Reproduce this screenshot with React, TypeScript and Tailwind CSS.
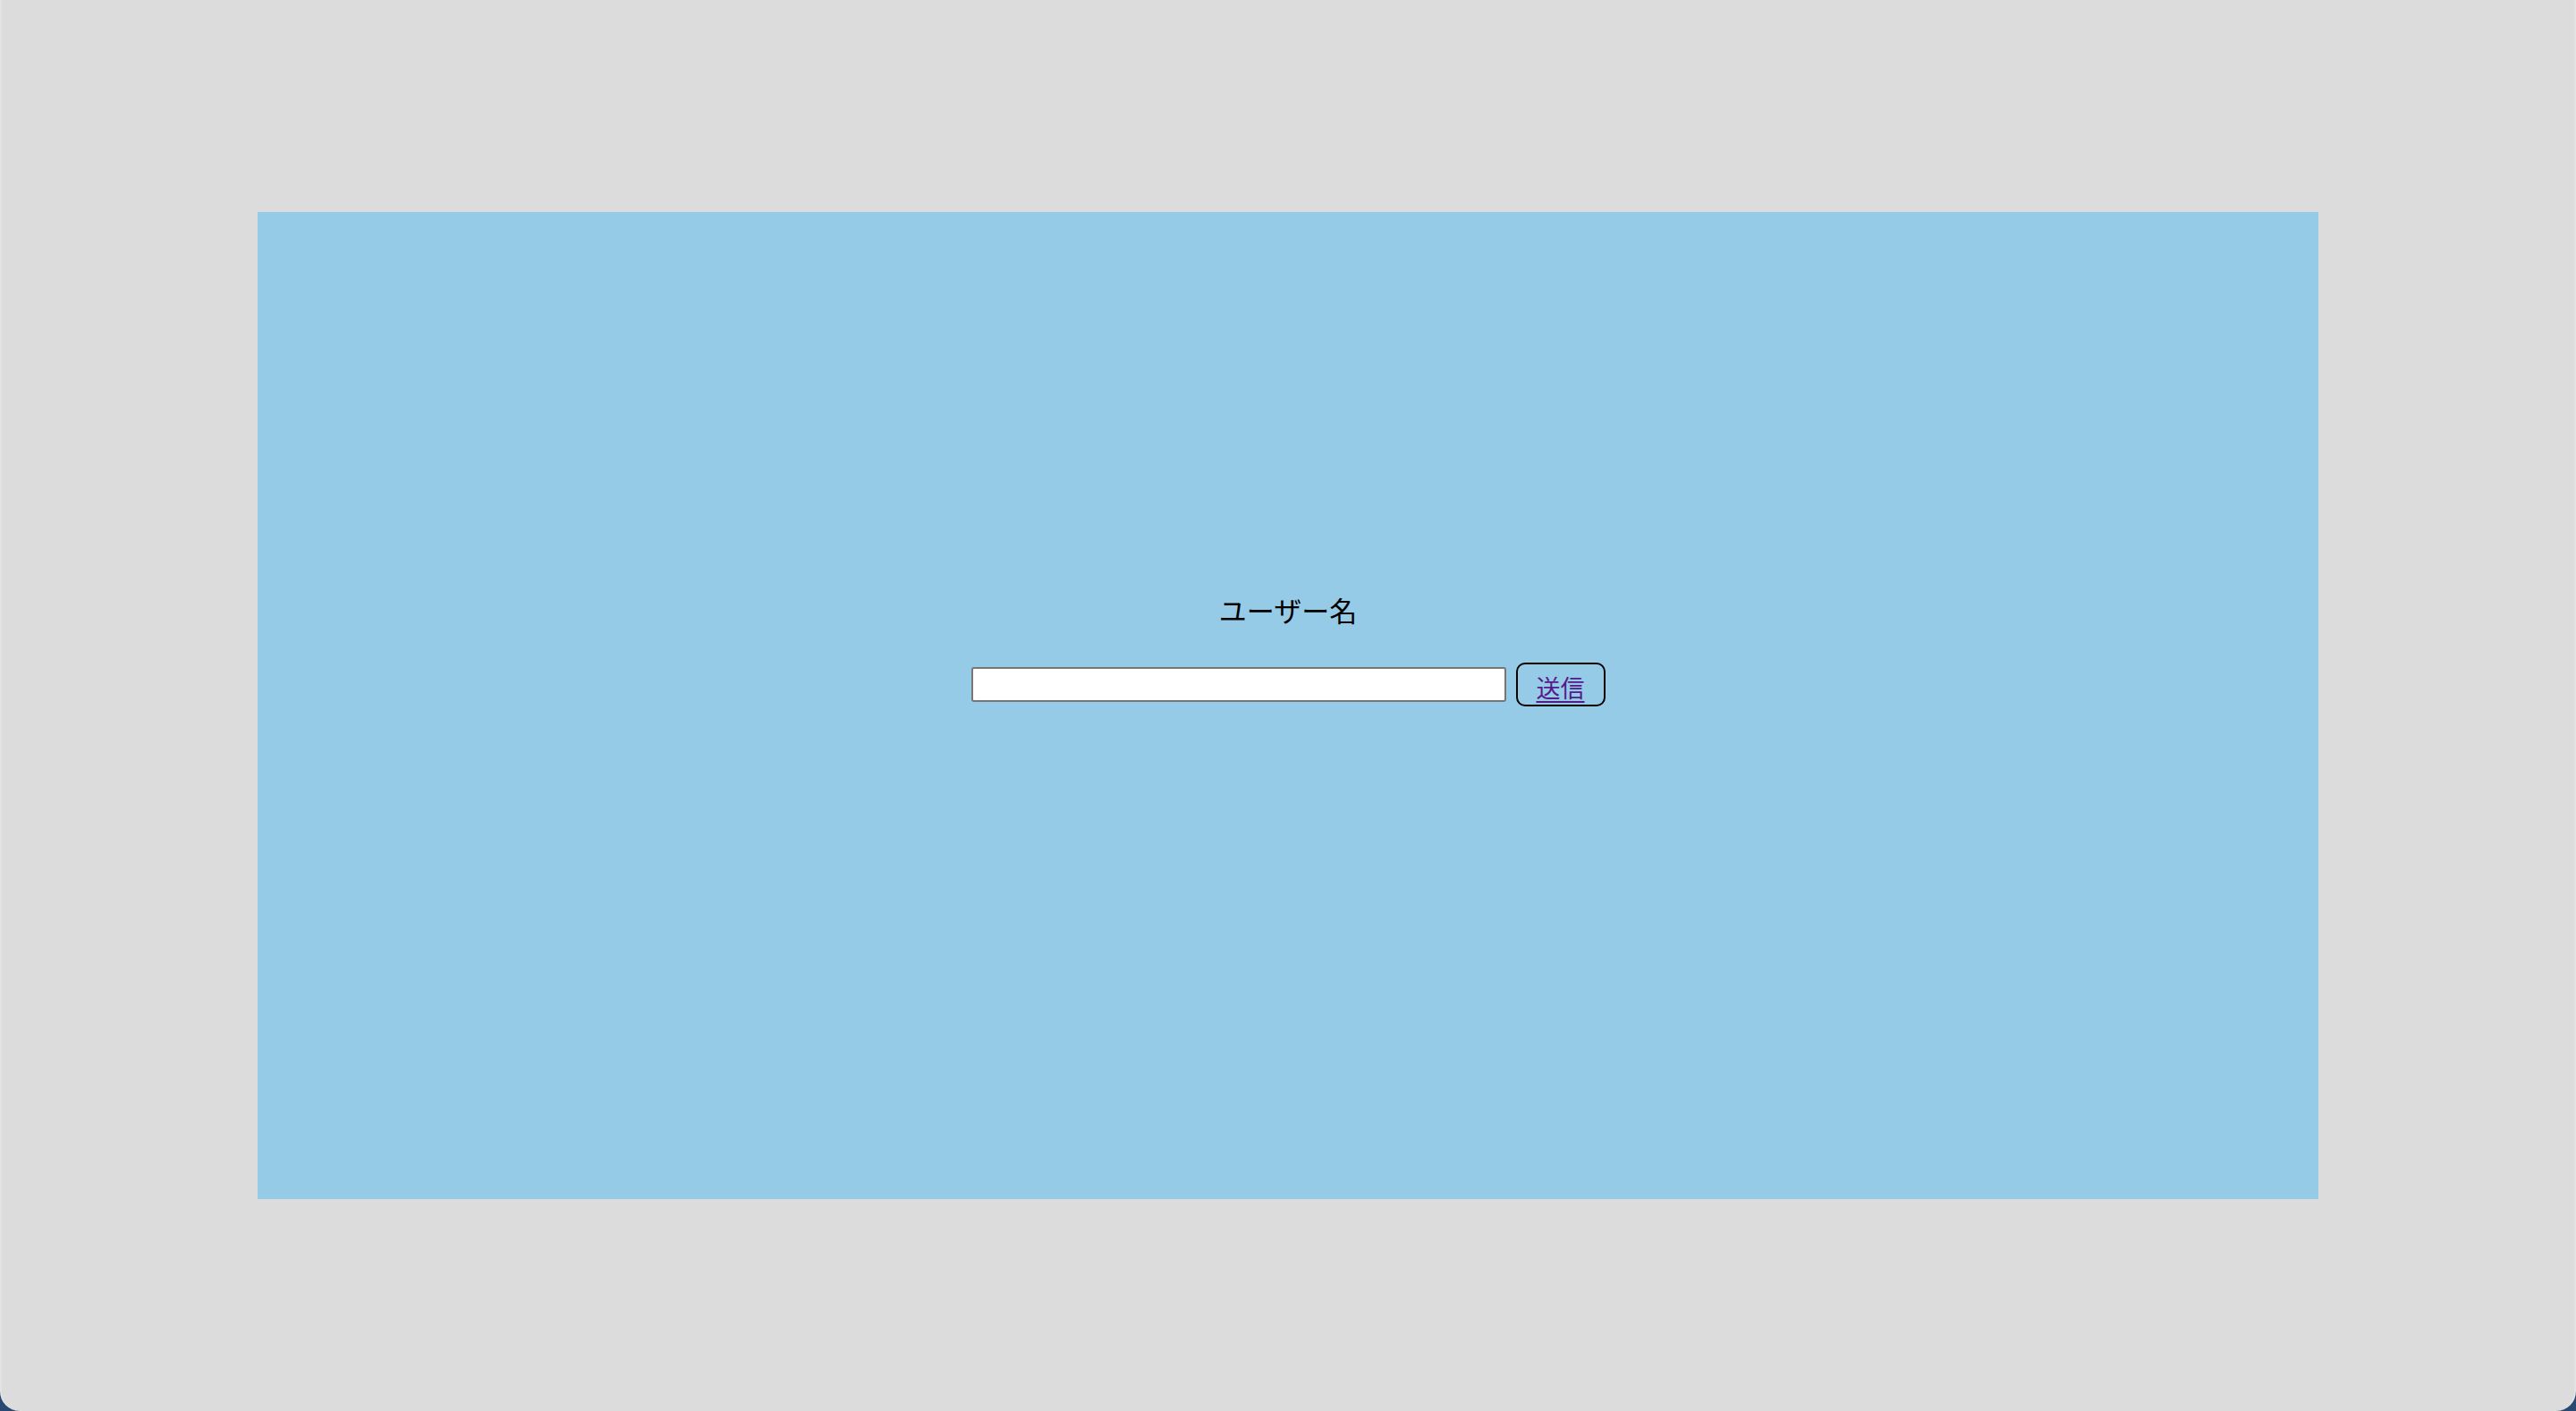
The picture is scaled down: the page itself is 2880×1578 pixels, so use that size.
export default function App() {
  return (
    <div className="h-[1578px] w-full bg-[#2b4870]">
      <div
        className="flex h-full w-full items-center justify-center rounded-b-[22px] border-x-2 border-[#e3e3e3] bg-[#dcdcdc]"
        style={{ fontFamily: '"Noto Sans CJK JP", "Noto Sans", sans-serif' }}
      >
        <div className="flex h-[1104px] w-[2304px] flex-col items-center bg-[#96cbe8] pt-[422px]">
          <label htmlFor="username" className="text-[31px] leading-[46px] text-black">
            ユーザー名
          </label>
          <form className="mt-[36px] flex items-center gap-[11px]" onSubmit={(e) => e.preventDefault()}>
            <input
              id="username"
              type="text"
              className="h-[39px] w-[598px] rounded-[3px] border-2 border-[#767676] bg-white px-2 text-[25px] outline-none"
            />
            <button
              type="submit"
              className="flex h-[49px] w-[100px] items-center justify-center rounded-[10px] border-2 border-black pt-[5px] text-[27px] leading-none text-[#551a8b] underline underline-offset-[4px]"
            >
              送信
            </button>
          </form>
        </div>
      </div>
    </div>
  );
}
